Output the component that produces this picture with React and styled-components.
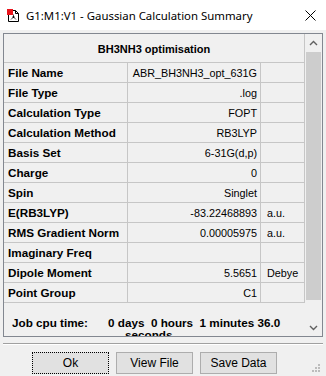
import React from 'react';
import styled, { createGlobalStyle } from 'styled-components';

const GlobalStyle = createGlobalStyle`
  html, body {
    margin: 0;
    padding: 0;
    background: #f0f0f0;
  }
  body {
    font-family: "Liberation Sans", Arial, sans-serif;
    color: #000;
  }
`

const Window = styled.div`
  position: relative;
  width: 326px;
  height: 376px;
  background: #f0f0f0;
  overflow: hidden;
  display: flex;
  flex-direction: column;
`

const TitleBar = styled.div`
  height: 30px;
  background: #fff;
  display: flex;
  align-items: center;
  padding-left: 7px;
  box-sizing: border-box;
`

const Title = styled.span`
  flex: 1;
  margin-left: 6px;
  font-family: "Noto Sans", "Open Sans", sans-serif;
  font-size: 11.4px;
  color: #000;
  white-space: nowrap;
`

const CloseButton = styled.div`
  width: 32px;
  height: 30px;
  display: flex;
  align-items: center;
  justify-content: center;
`

const Panel = styled.div`
  margin: 3px 3px 0 3px;
  height: 304px;
  border: 1px solid #828790;
  box-sizing: border-box;
  display: flex;
`

const Content = styled.div`
  width: 301px;
  overflow: hidden;
`

const HeaderRow = styled.div`
  height: 29px;
  box-sizing: border-box;
  border-bottom: 1px solid #c6c6c6;
  border-right: 1px solid #c6c6c6;
  display: flex;
  align-items: center;
  justify-content: center;
  font-size: 11px;
  font-weight: bold;
  padding-top: 1px;
`

const Row = styled.div`
  display: grid;
  grid-template-columns: 124px 133px 44px;
  height: 20px;
`

const Cell = styled.div`
  box-sizing: border-box;
  border-right: 1px solid #c6c6c6;
  border-bottom: 1px solid #c6c6c6;
  display: flex;
  align-items: center;
  white-space: nowrap;
  overflow: hidden;
  justify-content: ${p => (p.$align === 'right' ? 'flex-end' : 'flex-start')};
  padding: ${p => (p.$align === 'right' ? '0 3px 0 0' : p.$unit ? '0 0 0 6px' : '0 0 0 4px')};
  font-size: ${p => (p.$label ? '11.7px' : '10.8px')};
  font-weight: ${p => (p.$label ? 'bold' : 'normal')};
`

const JobRow = styled.div`
  display: flex;
  padding-top: 14px;
  font-size: 11.7px;
  font-weight: bold;
  line-height: 12px;
`

const JobLabel = styled.div`
  width: 104px;
  padding-left: 8px;
  box-sizing: border-box;
`

const JobValue = styled.div`
  white-space: pre;
`

const JobLine = styled.div`
  padding-left: ${p => p.$indent || 0}px;
`

const Scrollbar = styled.div`
  width: 17px;
  display: flex;
  flex-direction: column;
  background: #f0f0f0;
`

const ScrollArrow = styled.div`
  height: 17px;
  display: flex;
  align-items: center;
  justify-content: center;
  flex-shrink: 0;
`

const Thumb = styled.div`
  margin: 1px 1px 0 1px;
  height: 248px;
  background: #cdcdcd;
`

const Track = styled.div`
  flex: 1;
`

const Separator = styled.div`
  margin: 6px 3px 0 3px;
  height: 1px;
  background: #a0a0a0;
  border-bottom: 1px solid #fff;
`

const ButtonBar = styled.div`
  display: flex;
  gap: 7px;
  padding-left: 32px;
  margin-top: 7px;
`

const Button = styled.div`
  width: 77px;
  height: 22px;
  box-sizing: border-box;
  background: #e1e1e1;
  border: 1px ${p => (p.$focused ? 'dotted #000' : 'solid #adadad')};
  display: flex;
  align-items: center;
  justify-content: center;
  font-size: 12px;
`

const Grip = styled.svg`
  position: absolute;
  right: 5px;
  bottom: 3px;
`

const rows = [
  ['File Name', 'ABR_BH3NH3_opt_631G', ''],
  ['File Type', '.log', ''],
  ['Calculation Type', 'FOPT', ''],
  ['Calculation Method', 'RB3LYP', ''],
  ['Basis Set', '6-31G(d,p)', ''],
  ['Charge', '0', ''],
  ['Spin', 'Singlet', ''],
  ['E(RB3LYP)', '-83.22468893', 'a.u.'],
  ['RMS Gradient Norm', '0.00005975', 'a.u.'],
  ['Imaginary Freq', '', ''],
  ['Dipole Moment', '5.5651', 'Debye'],
  ['Point Group', 'C1', ''],
]

const AppIcon = () => (
  <svg width="13" height="13" viewBox="0 0 13 13">
    <path d="M1.5 1.5 H8.5 L11.5 4.5 V12.5 H1.5 Z" fill="#fff" stroke="#000" />
    <path d="M8.5 1.5 V4.5 H11.5" fill="none" stroke="#000" />
    <rect x="0" y="0" width="6" height="6" fill="#e8141c" />
    <path d="M6.5 8 L4 10.5 M6.5 8 L9 10.5 M6.5 8 L6.5 5.5" stroke="#333" strokeWidth="0.9" />
    <circle cx="6.5" cy="8" r="1" fill="#000" />
  </svg>
)

const Chevron = ({ up }) => (
  <svg width="9" height="6" viewBox="0 0 9 6">
    <polyline
      points={up ? '1,5 4.5,1.5 8,5' : '1,1 4.5,4.5 8,1'}
      fill="none"
      stroke="#606060"
      strokeWidth="1.4"
    />
  </svg>
)

const App = () => {
  return (
    <Window>
      <GlobalStyle />
      <TitleBar>
        <AppIcon />
        <Title>G1:M1:V1 - Gaussian Calculation Summary</Title>
        <CloseButton>
          <svg width="11" height="11" viewBox="0 0 11 11">
            <path d="M0.5 0.5 L10.5 10.5 M10.5 0.5 L0.5 10.5" stroke="#000" strokeWidth="1" />
          </svg>
        </CloseButton>
      </TitleBar>
      <Panel>
        <Content>
          <HeaderRow>BH3NH3 optimisation</HeaderRow>
          {rows.map(([label, value, unit]) => (
            <Row key={label}>
              <Cell $label>{label}</Cell>
              <Cell $align="right">{value}</Cell>
              <Cell $unit>{unit}</Cell>
            </Row>
          ))}
          <JobRow>
            <JobLabel>Job cpu time:</JobLabel>
            <JobValue>
              <JobLine>0 days  0 hours  1 minutes 36.0</JobLine>
              <JobLine $indent={17}>seconds</JobLine>
            </JobValue>
          </JobRow>
        </Content>
        <Scrollbar>
          <ScrollArrow><Chevron up /></ScrollArrow>
          <Thumb />
          <Track />
          <ScrollArrow><Chevron /></ScrollArrow>
        </Scrollbar>
      </Panel>
      <Separator />
      <ButtonBar>
        <Button $focused>Ok</Button>
        <Button>View File</Button>
        <Button>Save Data</Button>
      </ButtonBar>
      <Grip width="10" height="10" viewBox="0 0 10 10">
        <rect x="7" y="1" width="2" height="2" fill="#bcbcbc" />
        <rect x="4" y="4" width="2" height="2" fill="#bcbcbc" />
        <rect x="7" y="4" width="2" height="2" fill="#bcbcbc" />
        <rect x="1" y="7" width="2" height="2" fill="#bcbcbc" />
        <rect x="4" y="7" width="2" height="2" fill="#bcbcbc" />
        <rect x="7" y="7" width="2" height="2" fill="#bcbcbc" />
      </Grip>
    </Window>
  )
}

export default App
